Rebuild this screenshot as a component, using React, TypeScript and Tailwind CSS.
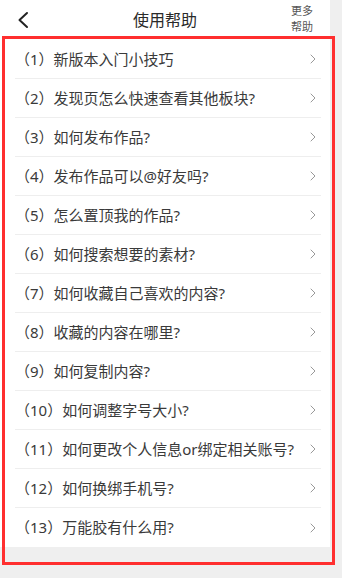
import { ChevronRight } from "lucide-react";

const items = [
  "（1）新版本入门小技巧",
  "（2）发现页怎么快速查看其他板块?",
  "（3）如何发布作品?",
  "（4）发布作品可以@好友吗?",
  "（5）怎么置顶我的作品?",
  "（6）如何搜索想要的素材?",
  "（7）如何收藏自己喜欢的内容?",
  "（8）收藏的内容在哪里?",
  "（9）如何复制内容?",
  "（10）如何调整字号大小?",
  "（11）如何更改个人信息or绑定相关账号?",
  "（12）如何换绑手机号?",
  "（13）万能胶有什么用?",
];

export default function App() {
  return (
    <div
      className="relative flex w-[342px] h-[578px] bg-[#efefef] overflow-hidden"
      style={{ fontFamily: '"Noto Sans", "Noto Sans CJK SC", sans-serif' }}
    >
      <div className="flex flex-col w-[330px]">
        {/* header */}
        <div className="flex items-start h-[40px] bg-white">
          <div className="w-[60px] pl-[16px] pt-[11px]">
            <svg width="14" height="18" viewBox="0 0 14 18" fill="none">
              <path d="M11 2 L3.5 9 L11 16" stroke="#222" strokeWidth="2" strokeLinecap="round" strokeLinejoin="round" />
            </svg>
          </div>
          <div className="flex-1 text-center pt-[8px] text-[16px] leading-[24px] text-[#2a2a2a]">使用帮助</div>
          <div className="w-[60px] flex justify-end pr-[17px] pt-[3px]">
            <div className="text-[11px] leading-[16px] text-[#555]">更多<br />帮助</div>
          </div>
        </div>
        {/* list */}
        <div className="flex flex-col bg-white">
          {items.map((t, i) => (
            <div key={i} className="flex items-center h-[39px] pl-[15px] pr-[9px]">
              <div className={`flex items-center flex-1 h-full ${i < items.length - 1 ? "border-b border-[#eeeeee]" : ""}`}>
                <span className="flex-1 text-[15px] text-[#3a3a3a] whitespace-nowrap">{t}</span>
                <ChevronRight size={16} strokeWidth={1.5} className="text-[#999]" />
              </div>
            </div>
          ))}
        </div>
      </div>
      {/* annotation box */}
      <div className="absolute left-[2px] top-[36px] w-[333px] h-[529px] border-[3px] border-[#ff2f2f] pointer-events-none" />
    </div>
  );
}
